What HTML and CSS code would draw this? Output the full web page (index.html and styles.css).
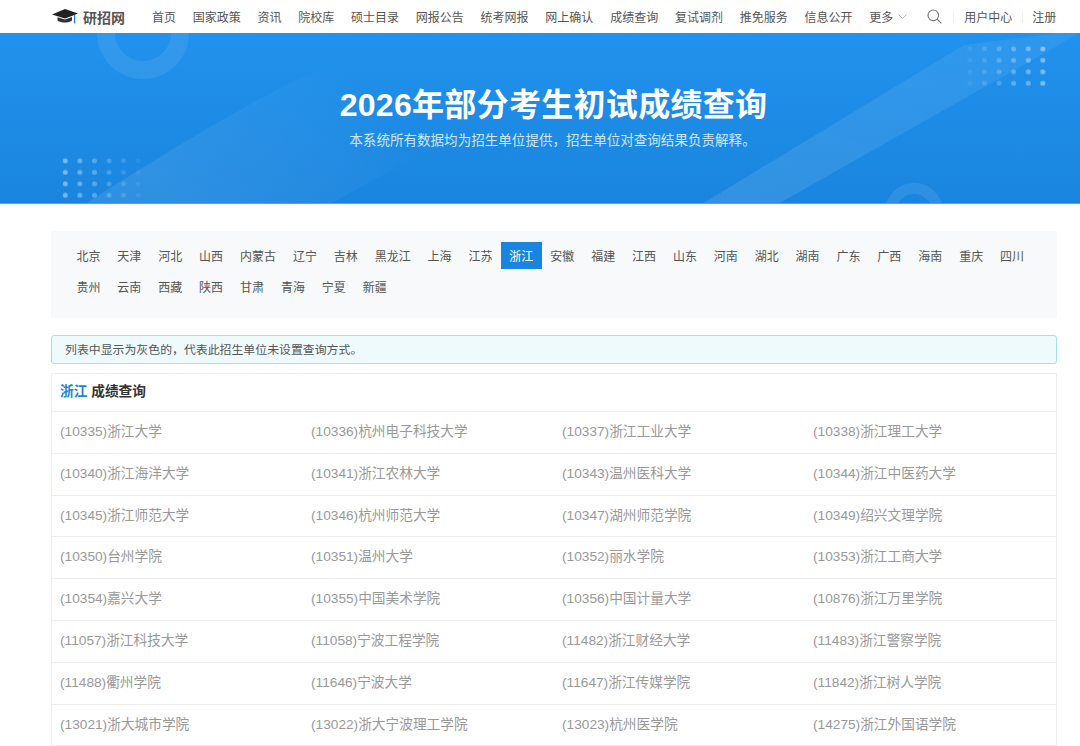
FILE: index.html
```html
<!DOCTYPE html>
<html lang="zh-CN">
<head>
<meta charset="utf-8">
<title>2026年部分考生初试成绩查询</title>
<link rel="stylesheet" href="styles.css">
</head>
<body>
<header class="topbar">
  <a class="logo">
    <svg class="logo-icon" width="26" height="15" viewBox="0 0 26 15"><path d="M0 5.500 13 0l13 4.500-3 1.200L13 9.500 0 5.500Z" fill="#222"/><path d="M5.500 8.200 13 10.600l7-2.600v3.400c-2 2.400-11 3-14.500 0Z" fill="#333"/><path d="M22.600 5.800v8.700" stroke="#1b7fd6" stroke-width="1.200" fill="none"/></svg>
    <span class="logo-text">研招网</span>
  </a>
  <nav class="nav">
    <a>首页</a><a>国家政策</a><a>资讯</a><a>院校库</a><a>硕士目录</a><a>网报公告</a><a>统考网报</a><a>网上确认</a><a>成绩查询</a><a>复试调剂</a><a>推免服务</a><a>信息公开</a>
    <a class="more">更多<svg width="9" height="5" viewBox="0 0 9 5"><path d="M.5.5l4 4 4-4" stroke="#bbb" fill="none"/></svg></a>
  </nav>
  <svg class="search" width="15" height="15" viewBox="0 0 15 15"><circle cx="6.300" cy="6.300" r="5.300" stroke="#777" stroke-width="1.100" fill="none"/><path d="M10.200 10.200 14.300 14.300" stroke="#777" stroke-width="1.200"/></svg>
  <span class="sep sep-a"></span>
  <a class="user">用户中心</a>
  <span class="sep sep-b"></span>
  <a class="user">注册</a>
</header>

<section class="banner">
  <svg class="banner-art" width="1080" height="171" viewBox="0 0 1080 171">
    <defs>
      <linearGradient id="fadeL" gradientUnits="userSpaceOnUse" x1="170" y1="171" x2="340" y2="20"><stop offset="0" stop-color="#fff" stop-opacity=".09"/><stop offset=".7" stop-color="#fff" stop-opacity=".03"/><stop offset="1" stop-color="#fff" stop-opacity="0"/></linearGradient>
      <linearGradient id="fadeR" x1="0" y1="1" x2="1" y2="0"><stop offset="0" stop-color="#fff" stop-opacity=".11"/><stop offset=".6" stop-color="#fff" stop-opacity=".08"/><stop offset="1" stop-color="#fff" stop-opacity=".05"/></linearGradient>
      <linearGradient id="dotL" x1="0" x2="1" y1="0" y2="0"><stop offset="0" stop-color="#fff" stop-opacity=".45"/><stop offset="1" stop-color="#fff" stop-opacity=".03"/></linearGradient>
      <linearGradient id="dotR" x1="1" x2="0" y1="0" y2="0"><stop offset="0" stop-color="#fff" stop-opacity=".45"/><stop offset="1" stop-color="#fff" stop-opacity=".03"/></linearGradient>
      <pattern id="dots" x="58" y="122" width="14.600" height="11.500" patternUnits="userSpaceOnUse"><circle cx="7.300" cy="5.750" r="2.500" fill="#fff"/></pattern>
      <pattern id="dotsB" x="962.500" y="10" width="14.600" height="11.500" patternUnits="userSpaceOnUse"><circle cx="7.300" cy="5.750" r="2.500" fill="#fff"/></pattern>
      <mask id="mL"><rect x="58" y="122" width="88" height="46" fill="url(#dotL)"/></mask>
      <mask id="mR"><rect x="962" y="10" width="88" height="46" fill="url(#dotR)"/></mask>
    </defs>
    <path d="M85 171C150 130 220 85 300 45C380 15 460 0 520 0H640L330 171Z" fill="url(#fadeL)"/>
    <polygon points="702,171 964,12 1056,0 1080,0 778,171" fill="url(#fadeR)"/>
    <circle cx="143" cy="0" r="37" fill="none" stroke="#fff" stroke-opacity=".08" stroke-width="18"/>
    <circle cx="914" cy="179" r="23.500" fill="none" stroke="#fff" stroke-opacity=".09" stroke-width="11"/>
    <rect x="58" y="122" width="88" height="46" fill="url(#dots)" mask="url(#mL)"/>
    <rect x="962" y="10" width="88" height="46" fill="url(#dotsB)" mask="url(#mR)"/>
  </svg>
  <div class="banner-copy">
    <h1>2026年部分考生初试成绩查询</h1>
    <p>本系统所有数据均为招生单位提供，招生单位对查询结果负责解释。</p>
  </div>
</section>

<main class="page">
  <ul class="regions">
    <li>北京</li><li>天津</li><li>河北</li><li>山西</li><li>内蒙古</li><li>辽宁</li><li>吉林</li><li>黑龙江</li><li>上海</li><li>江苏</li><li class="active">浙江</li><li>安徽</li><li>福建</li><li>江西</li><li>山东</li><li>河南</li><li>湖北</li><li>湖南</li><li>广东</li><li>广西</li><li>海南</li><li>重庆</li><li>四川</li><li>贵州</li><li>云南</li><li>西藏</li><li>陕西</li><li>甘肃</li><li>青海</li><li>宁夏</li><li>新疆</li>
  </ul>
  <div class="notice">列表中显示为灰色的，代表此招生单位未设置查询方式。</div>
  <section class="results">
    <h2><span class="province">浙江</span> 成绩查询</h2>
    <div class="schools">
      <a>(10335)浙江大学</a><a>(10336)杭州电子科技大学</a><a>(10337)浙江工业大学</a><a>(10338)浙江理工大学</a>
      <a>(10340)浙江海洋大学</a><a>(10341)浙江农林大学</a><a>(10343)温州医科大学</a><a>(10344)浙江中医药大学</a>
      <a>(10345)浙江师范大学</a><a>(10346)杭州师范大学</a><a>(10347)湖州师范学院</a><a>(10349)绍兴文理学院</a>
      <a>(10350)台州学院</a><a>(10351)温州大学</a><a>(10352)丽水学院</a><a>(10353)浙江工商大学</a>
      <a>(10354)嘉兴大学</a><a>(10355)中国美术学院</a><a>(10356)中国计量大学</a><a>(10876)浙江万里学院</a>
      <a>(11057)浙江科技大学</a><a>(11058)宁波工程学院</a><a>(11482)浙江财经大学</a><a>(11483)浙江警察学院</a>
      <a>(11488)衢州学院</a><a>(11646)宁波大学</a><a>(11647)浙江传媒学院</a><a>(11842)浙江树人学院</a>
      <a>(13021)浙大城市学院</a><a>(13022)浙大宁波理工学院</a><a>(13023)杭州医学院</a><a>(14275)浙江外国语学院</a>
    </div>
  </section>
</main>
</body>
</html>
```
FILE: styles.css
```css
* { box-sizing: border-box; }
html { overflow: hidden; }
body {
  margin: 0;
  background: #fff;
  color: #555;
  font-family: "Liberation Sans", "Noto Sans CJK SC", sans-serif;
}
a { color: inherit; text-decoration: none; white-space: nowrap; }

.topbar {
  height: 33px;
  padding: 0 23px 0 52px;
  display: flex;
  align-items: center;
  font-size: 12px;
  color: #555;
}
.logo { display: flex; align-items: center; gap: 5px; flex: 0 0 100px; }
.logo-text {
  font-family: "Liberation Serif", "Noto Sans CJK SC", serif;
  font-weight: 700;
  font-size: 14px;
  color: #555;
}
.nav { display: flex; flex: none; gap: 16.750px; align-items: center; }
.more { display: flex; align-items: center; gap: 5px; }
.search { flex: none; margin-left: 20px; }
.sep { flex: none; width: 1px; height: 12px; background: #eee; }
.sep-a { margin: 0 10.500px; }
.sep-b { margin: 0 9.500px; }

.banner {
  position: relative;
  height: 171px;
  overflow: hidden;
  background: linear-gradient(180deg, #2192ed 0%, #1a85de 100%);
  border-bottom: 1px solid #4ba5ec;
  color: #fff;
  text-align: center;
}
.banner-art { position: absolute; left: 0; top: 0; }
.banner-copy { position: relative; padding: 49px 0 0 25px; }
.banner h1 { margin: 0 0 0 2px; font-size: 32px; line-height: 46px; font-weight: 700; letter-spacing: .3px; }
.banner p { margin: 3px 0 0; font-size: 13.550px; line-height: 20px; color: #cfe6fa; }

.page { padding: 27px 23px 0 51px; }
.regions {
  list-style: none;
  margin: 0;
  height: 87px;
  padding: 11px 17px 0;
  display: flex;
  flex-wrap: wrap;
  align-content: flex-start;
  row-gap: 4px;
  background: #f7f9fa;
  font-size: 12px;
  color: #555;
}
.regions li { height: 27px; line-height: 30px; padding: 0 8.450px; }
.regions .active { background: #1a85de; color: #fff; }
.notice {
  margin-top: 17px;
  height: 29px;
  line-height: 28px;
  padding: 0 13px;
  font-size: 11.900px;
  color: #555;
  background: #effafd;
  border: 1px solid #a5e0ee;
  border-radius: 3px;
}
.results { margin-top: 9px; border: 1px solid #eee; }
.results h2 {
  margin: 0;
  height: 38px;
  line-height: 36px;
  padding: 0 8px;
  font-size: 13.700px;
  font-weight: 700;
  color: #333;
  border-bottom: 1px solid #eee;
}
.province { color: #1a85de; }
.schools { display: grid; grid-template-columns: repeat(4, 1fr); }
.schools a {
  height: 41.800px;
  line-height: 39.500px;
  padding: 0 8px;
  font-size: 13.700px;
  color: #999;
  border-bottom: 1px solid #eee;
}
```
